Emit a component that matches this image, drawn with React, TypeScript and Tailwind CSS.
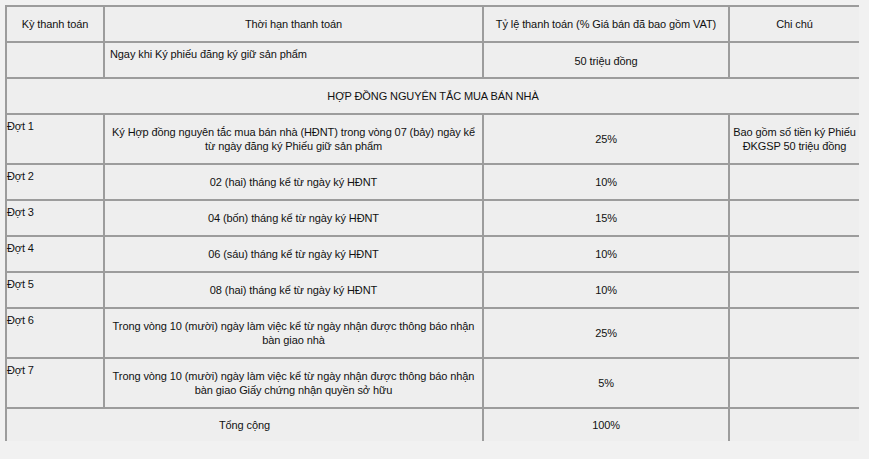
import React from "react";

const cell = "border-l-2 border-t-2 border-[#9c9c9c] bg-[#eeeeee]";

function Center({ children, className = "" }: { children?: React.ReactNode; className?: string }) {
  return <div className={`${cell} flex items-center justify-center text-center ${className}`}>{children}</div>;
}

const rows: { label: string; h: string; text: React.ReactNode; pct: string; note?: React.ReactNode }[] = [
  {
    label: "Đợt 1",
    h: "h-[50px]",
    text: (
      <>
        Ký Hợp đồng nguyên tắc mua bán nhà (HĐNT) trong vòng 07 (bảy) ngày kể
        <br />
        từ ngày đăng ký Phiếu giữ sản phẩm
      </>
    ),
    pct: "25%",
    note: (
      <>
        Bao gồm số tiền ký Phiếu
        <br />
        ĐKGSP 50 triệu đồng
      </>
    ),
  },
  { label: "Đợt 2", h: "h-[36px]", text: "02 (hai) tháng kể từ ngày ký HĐNT", pct: "10%" },
  { label: "Đợt 3", h: "h-[36px]", text: "04 (bốn) tháng kể từ ngày ký HĐNT", pct: "15%" },
  { label: "Đợt 4", h: "h-[36px]", text: "06 (sáu) tháng kể từ ngày ký HĐNT", pct: "10%" },
  { label: "Đợt 5", h: "h-[36px]", text: "08 (hai) tháng kể từ ngày ký HĐNT", pct: "10%" },
  {
    label: "Đợt 6",
    h: "h-[50px]",
    text: (
      <>
        Trong vòng 10 (mười) ngày làm việc kể từ ngày nhận được thông báo nhận
        <br />
        bàn giao nhà
      </>
    ),
    pct: "25%",
  },
  {
    label: "Đợt 7",
    h: "h-[50px]",
    text: (
      <>
        Trong vòng 10 (mười) ngày làm việc kể từ ngày nhận được thông báo nhận
        <br />
        bàn giao Giấy chứng nhận quyền sở hữu
      </>
    ),
    pct: "5%",
  },
];

export default function App() {
  return (
    <div
      className="w-[869px] h-[459px] bg-[#f1f1f1] pt-[5px] pl-[5px] text-[11px] leading-[14px] tracking-[-0.1px] text-[#111]"
      style={{ fontFamily: '"Liberation Sans", Arial, sans-serif' }}
    >
      <div className="w-[854px] grid grid-cols-[98px_379px_246px_131px]">
        {/* header */}
        <Center className="h-[36px]">Kỳ thanh toán</Center>
        <Center className="h-[36px]">Thời hạn thanh toán</Center>
        <Center className="h-[36px]">Tỷ lệ thanh toán (% Giá bán đã bao gồm VAT)</Center>
        <Center className="h-[36px]">Chi chú</Center>

        {/* row 1 */}
        <div className={`${cell} h-[36px]`} />
        <div className={`${cell} h-[36px] pt-[4px] pl-[5px]`}>Ngay khi Ký phiếu đăng ký giữ sản phẩm</div>
        <Center className="h-[36px] pt-[2px]">50 triệu đồng</Center>
        <div className={`${cell} h-[36px]`} />

        {/* section */}
        <Center className="col-span-4 h-[36px]">HỢP ĐỒNG NGUYÊN TẮC MUA BÁN NHÀ</Center>

        {rows.map((r) => (
          <React.Fragment key={r.label}>
            <div className={`${cell} ${r.h} pt-[4px]`}>{r.label}</div>
            <Center className={r.h}>{r.text}</Center>
            <Center className={r.h}>{r.pct}</Center>
            <Center className={r.h}>{r.note}</Center>
          </React.Fragment>
        ))}

        {/* total */}
        <Center className="col-span-2 h-[34px]">Tổng cộng</Center>
        <Center className="h-[34px]">100%</Center>
        <div className={`${cell} h-[34px]`} />
      </div>
    </div>
  );
}
